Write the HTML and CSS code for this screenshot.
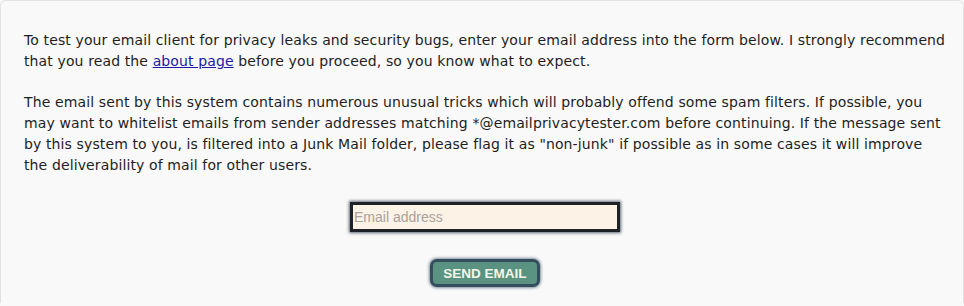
FILE: index.html
```html
<!DOCTYPE html>
<html>
<head>
<meta charset="utf-8">
<link rel="stylesheet" href="styles.css">
</head>
<body>
<div class="panel">
  <p class="intro">To test your email client for privacy leaks and security bugs, enter your email address into the form below. I strongly recommend that you read the <a href="#">about page</a> before you proceed, so you know what to expect.</p>
  <p class="intro">The email sent by this system contains numerous unusual tricks which will probably offend some spam filters. If possible, you may want to whitelist emails from sender addresses matching *@emailprivacytester.com before continuing. If the message sent by this system to you, is filtered into a Junk Mail folder, please flag it as "non-junk" if possible as in some cases it will improve the deliverability of mail for other users.</p>
  <form class="signup">
    <input class="email" type="text" placeholder="Email address">
    <button class="send" type="button">SEND EMAIL</button>
  </form>
</div>
</body>
</html>
```
FILE: styles.css
```css
html, body {
  margin: 0;
  padding: 0;
  background: #f9f9f9;
}
body {
  height: 306px;
  overflow: hidden;
}
.panel {
  box-sizing: border-box;
  border: 1px solid #e2e2e2;
  border-bottom: none;
  border-radius: 6px 6px 0 0;
  background: #f9f9f9;
  padding: 29px 17px 16px 23px;
  font-family: "DejaVu Sans", Verdana, sans-serif;
  font-size: 14px;
  letter-spacing: 0.12px;
  line-height: 21px;
  color: #1e1e1e;
}
.intro {
  margin: 0 0 20px 0;
}
.intro a {
  color: #1a1aa6;
}
.signup {
  display: flex;
  flex-direction: column;
  align-items: center;
  gap: 27px;
  padding-top: 6px;
}
.email {
  box-sizing: border-box;
  width: 270px;
  height: 30px;
  border: 3px solid #1e2226;
  background: #fdf2e6;
  box-shadow: 0 0 3px 1px #5a6672;
  padding: 0 1px;
  font-family: "Liberation Sans", Arial, sans-serif;
  font-size: 14px;
  letter-spacing: 0;
  color: #333;
  outline: none;
}
.email::placeholder {
  color: #a8a29c;
}
.send {
  box-sizing: border-box;
  width: 110px;
  height: 28px;
  border: 3px solid #344e5e;
  border-radius: 7px;
  background: #5a9382;
  box-shadow: 0 0 3px 1px #7c8e9c;
  color: #f4f7e8;
  font-family: "Liberation Sans", Arial, sans-serif;
  font-weight: bold;
  font-size: 13.5px;
  letter-spacing: 0;
  padding: 0;
}
```
